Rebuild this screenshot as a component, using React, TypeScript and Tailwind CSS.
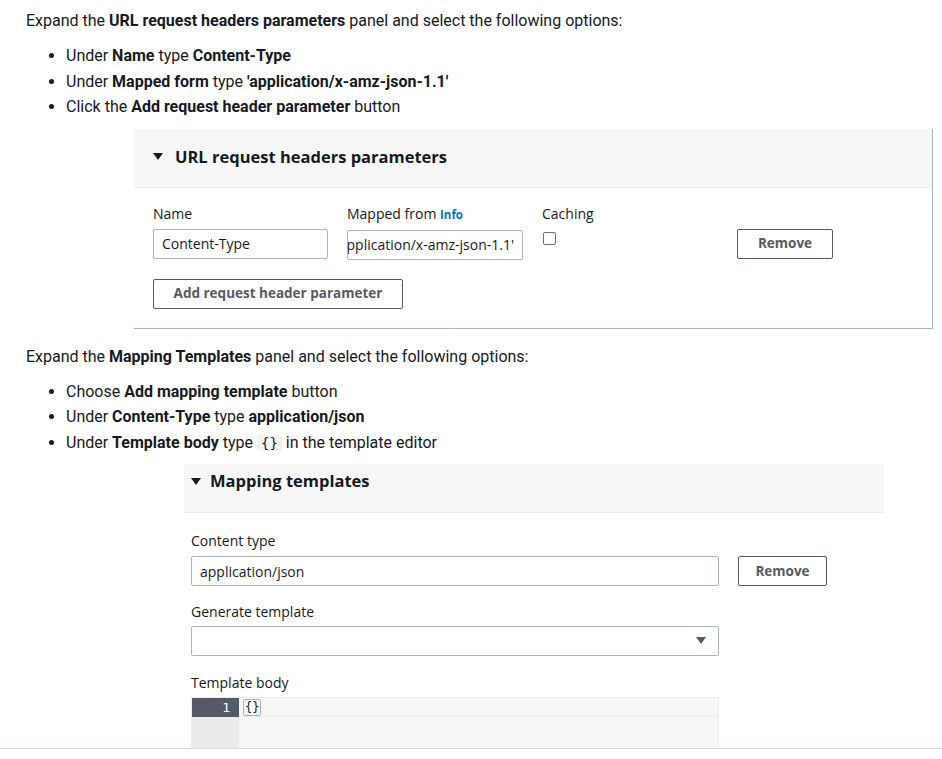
import React from 'react';

const Caret: React.FC<{ className?: string }> = ({ className }) => (
  <svg width="10" height="8" viewBox="0 0 10 8" className={className}>
    <polygon points="0,0 10,0 5,7" fill="currentColor" />
  </svg>
);

const Field: React.FC<{ children: React.ReactNode; className?: string }> = ({ children, className = '' }) => (
  <div
    className={`h-[30px] border border-[#aab7b8] rounded-[2px] bg-white flex items-center px-[8px] text-[14px] text-[#16191f] ${className}`}
  >
    {children}
  </div>
);

const RemoveButton: React.FC<{ className?: string }> = ({ className = '' }) => (
  <button
    className={`h-[30px] border border-[#545b64] rounded-[2px] bg-white text-[13.5px] font-bold text-[#545b64] ${className}`}
  >
    Remove
  </button>
);

const App: React.FC = () => {
  return (
    <div className="h-[749px] overflow-hidden border-b border-[#d5dbdb] bg-white font-['Roboto',sans-serif] text-[#16191f]">
      {/* Step 1 */}
      <div className="pl-[26px] pt-[11px]">
        <p className="text-[16px] leading-[20px]">
          Expand the <b>URL request headers parameters</b> panel and select the following options:
        </p>
        <ul className="mt-[12px] pl-[40px] list-disc text-[16px] leading-[25.5px]">
          <li>
            Under <b>Name</b> type <b>Content-Type</b>
          </li>
          <li>
            Under <b>Mapped form</b> type <b>'application/x-amz-json-1.1'</b>
          </li>
          <li>
            Click the <b>Add request header parameter</b> button
          </li>
        </ul>
      </div>

      {/* URL request headers panel */}
      <div className="ml-[134px] mt-[9px] w-[799px] border-r border-b border-[#aab7b8] font-['Open_Sans',sans-serif]">
        <div className="h-[59px] bg-[#f7f7f7] border-b border-[#eaeded] flex items-center gap-[12px] pl-[19px] pb-[1px]">
          <Caret className="text-[#16191f]" />
          <span className="text-[16.5px] font-bold">URL request headers parameters</span>
        </div>
        <div className="pl-[19px] pt-[17px] pb-[19px]">
          <div className="flex gap-[19px]">
            <div className="w-[175px]">
              <div className="text-[14px] leading-[18px] mb-[6px]">Name</div>
              <Field>Content-Type</Field>
            </div>
            <div className="w-[176px]">
              <div className="text-[14px] leading-[18px] mb-[6px]">
                Mapped from <span className="text-[11.5px] font-bold text-[#0073bb]">Info</span>
              </div>
              <Field className="border-[#0073bb] justify-end overflow-hidden whitespace-nowrap">
                <span>'application/x-amz-json-1.1'</span>
              </Field>
            </div>
            <div className="w-[120px]">
              <div className="text-[14px] leading-[18px] mb-[9px]">Caching</div>
              <div className="ml-[1px] w-[13px] h-[13px] border border-[#687078] rounded-[2px] bg-white" />
            </div>
            <div className="pt-[24px] ml-[56px]">
              <RemoveButton className="w-[96px]" />
            </div>
          </div>
          <button className="mt-[19px] w-[250px] h-[30px] border border-[#545b64] rounded-[2px] bg-white text-[13.5px] font-bold text-[#545b64]">
            Add request header parameter
          </button>
        </div>
      </div>

      {/* Step 2 */}
      <div className="pl-[26px] pt-[18px]">
        <p className="text-[16px] leading-[20px]">
          Expand the <b>Mapping Templates</b> panel and select the following options:
        </p>
        <ul className="mt-[12px] pl-[40px] list-disc text-[16px] leading-[25.5px]">
          <li>
            Choose <b>Add mapping template</b> button
          </li>
          <li>
            Under <b>Content-Type</b> type <b>application/json</b>
          </li>
          <li>
            Under <b>Template body</b> type{' '}
            <code className="bg-[#f3f3f3] px-[4px] rounded-[3px] text-[14px] font-['DejaVu_Sans_Mono',monospace]">
              {'{}'}
            </code>{' '}
            in the template editor
          </li>
        </ul>
      </div>

      {/* Mapping templates panel */}
      <div className="ml-[184px] mt-[8px] w-[700px] font-['Open_Sans',sans-serif]">
        <div className="h-[49px] bg-[#f7f7f7] border-b border-[#eaeded] flex items-start gap-[9px] pl-[7px] pt-[7px]">
          <Caret className="text-[#16191f] mt-[7px]" />
          <span className="text-[16.5px] font-bold leading-[20px]">Mapping templates</span>
        </div>
        <div className="pl-[7px] pt-[19px]">
          <div className="text-[14px] leading-[18px] mb-[6px]">Content type</div>
          <div className="flex gap-[19px]">
            <Field className="w-[528px]">application/json</Field>
            <RemoveButton className="w-[89px]" />
          </div>

          <div className="text-[14px] leading-[18px] mt-[17px] mb-[5px]">Generate template</div>
          <Field className="w-[528px] justify-end pr-[12px]">
            <Caret className="text-[#545b64]" />
          </Field>

          <div className="text-[14px] leading-[18px] mt-[18px] mb-[5px]">Template body</div>
          <div className="w-[528px] h-[120px] border border-[#eaeded] bg-[#f7f7f7] flex">
            <div className="w-[47px] bg-[#ebebeb] flex flex-col">
              <div className="h-[19px] bg-[#545b64] text-white text-[13px] leading-[19px] text-right pr-[9px] font-['DejaVu_Sans_Mono',monospace]">
                1
              </div>
            </div>
            <div className="flex-1">
              <div className="h-[19px] border-b border-[#eaeded] flex items-center pl-[4px]">
                <span className="border border-[#aab7b8] rounded-[2px] text-[12px] leading-[15px] px-[1px] font-['DejaVu_Sans_Mono',monospace]">
                  {'{}'}
                </span>
              </div>
            </div>
          </div>
        </div>
      </div>
    </div>
  );
};

export default App;
